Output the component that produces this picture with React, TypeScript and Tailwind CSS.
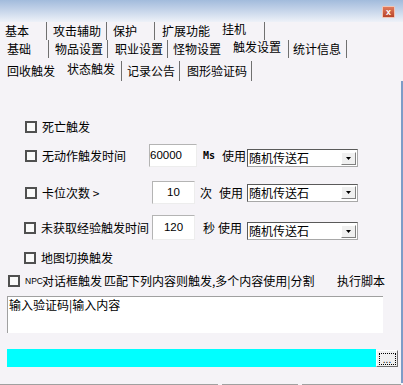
import React from 'react';

type Tab = { t: string; w: number; pl: number; sep: boolean; active?: boolean };

const ROW1: Tab[] = [
  { t: '基本', w: 47, pl: 5, sep: true },
  { t: '攻击辅助', w: 60, pl: 6, sep: true },
  { t: '保护', w: 48, pl: 6, sep: true },
  { t: '扩展功能', w: 62, pl: 7, sep: false },
  { t: '挂机', w: 48, pl: 5, sep: true, active: true },
];

const ROW2: Tab[] = [
  { t: '基础', w: 49, pl: 7, sep: true },
  { t: '物品设置', w: 59, pl: 6, sep: true },
  { t: '职业设置', w: 60, pl: 7, sep: true },
  { t: '怪物设置', w: 60, pl: 5, sep: false },
  { t: '触发设置', w: 61, pl: 5, sep: true, active: true },
  { t: '统计信息', w: 58, pl: 4, sep: true },
];

const ROW3: Tab[] = [
  { t: '回收触发', w: 62, pl: 7, sep: false },
  { t: '状态触发', w: 60, pl: 5, sep: true, active: true },
  { t: '记录公告', w: 58, pl: 5, sep: true },
  { t: '图形验证码', w: 72, pl: 7, sep: true },
];

function TabRow({ tabs, h }: { tabs: Tab[]; h: string }) {
  return (
    <div className={`flex ${h}`}>
      {tabs.map((tab) => (
        <div
          key={tab.t}
          className={`flex items-center shrink-0 h-full text-[12px] leading-none text-black ${tab.sep ? 'border-r border-[#707070]' : ''}`}
          style={{ width: tab.w, paddingLeft: tab.pl }}
        >
          <span className={tab.active ? '-translate-y-[2px]' : ''}>{tab.t}</span>
        </div>
      ))}
    </div>
  );
}

function Check() {
  return <div className="w-[12px] h-[12px] shrink-0 border-2 border-[#505050] bg-[#fafafa]" />;
}

function Dropdown() {
  return (
    <div className="flex items-center w-[111px] h-[18px] shrink-0 bg-white border border-t-[#5a5a5a] border-l-[#5a5a5a] border-r-[#a8a8a8] border-b-[#a8a8a8]">
      <span className="pl-[1px] text-[12px] leading-none grow">随机传送石</span>
      <div className="w-[15px] h-[13px] mr-[1px] flex items-center justify-center bg-[#f0f0f0] border border-t-white border-l-white border-r-[#808080] border-b-[#808080]">
        <svg width="5" height="3" viewBox="0 0 5 3">
          <path d="M0 0h5L2.5 3z" fill="#000" />
        </svg>
      </div>
    </div>
  );
}

function NumInput({ v, w, h, center }: { v: string; w: string; h: string; center?: boolean }) {
  return (
    <div
      className={`${w} ${h} shrink-0 flex items-center bg-white border border-t-[#b4b4b4] border-l-[#b4b4b4] border-r-[#ededed] border-b-[#ededed] text-[11.5px] leading-none font-['Liberation_Sans',sans-serif] ${center ? 'justify-center' : ''}`}
    >
      {v}
    </div>
  );
}

export default function App() {
  return (
    <div className="w-[403px] h-[385px] overflow-hidden bg-[#f5f3f7] text-black font-['Noto_Sans_CJK_SC','Noto_Sans',sans-serif]">
      {/* title bar */}
      <div className="h-[22px] flex justify-end items-start pt-[6px] pr-[8px] bg-gradient-to-b from-[#a2bbdc] to-[#eef1f8]">
        <div className="w-[13px] h-[12px] flex items-center justify-center rounded-[1px] bg-gradient-to-b from-[#e07a5c] to-[#b8442a] border border-[#f2c4b4] text-white text-[9px] font-bold leading-none font-['Liberation_Sans',sans-serif]">
          x
        </div>
      </div>

      <TabRow tabs={ROW1} h="h-[18px]" />
      <TabRow tabs={ROW2} h="h-[18px]" />
      <div className="mt-[3px]">
        <TabRow tabs={ROW3} h="h-[20px]" />
      </div>

      {/* content panel */}
      <div className="h-[302px] border-r-2 border-[#7d9cc7] flex flex-col">
        <div className="mt-[38px] h-[16px] flex items-center pl-[25px]">
          <Check />
          <span className="ml-[5px] text-[12px] leading-none">死亡触发</span>
        </div>

        <div className="mt-[9px] h-[23px] flex items-center pl-[25px]">
          <Check />
          <span className="ml-[5px] w-[107px] text-[12px] leading-none">无动作触发时间</span>
          <NumInput v="60000" w="w-[48px]" h="h-[23px]" />
          <span className="w-[25px] pl-[6px] text-[10px] font-bold leading-none font-['DejaVu_Sans_Mono',monospace]">Ms</span>
          <span className="w-[25px] text-[12px] leading-none">使用</span>
          <div className="self-end">
            <Dropdown />
          </div>
        </div>

        <div className="mt-[14px] h-[23px] flex items-center pl-[25px]">
          <Check />
          <span className="ml-[5px] w-[110px] text-[12px] leading-none">卡位次数 &gt;</span>
          <NumInput v="10" w="w-[43px]" h="h-[23px]" center />
          <span className="w-[24px] pl-[5px] text-[12px] leading-none">次</span>
          <span className="w-[28px] text-[12px] leading-none">使用</span>
          <Dropdown />
        </div>

        <div className="mt-[11px] h-[25px] flex items-center pl-[24px]">
          <Check />
          <span className="ml-[5px] w-[111px] text-[12px] leading-none">未获取经验触发时间</span>
          <NumInput v="120" w="w-[43px]" h="h-[25px]" center />
          <span className="w-[23px] pl-[8px] text-[12px] leading-none">秒</span>
          <span className="w-[29px] text-[12px] leading-none">使用</span>
          <div className="self-end">
            <Dropdown />
          </div>
        </div>

        <div className="mt-[10px] h-[16px] flex items-center pl-[24px]">
          <Check />
          <span className="ml-[5px] text-[12px] leading-none">地图切换触发</span>
        </div>

        <div className="mt-[7px] h-[16px] flex items-center pl-[8px]">
          <Check />
          <div className="ml-[5px] w-[79px] flex items-center shrink-0 whitespace-nowrap">
            <span className="w-[17px] shrink-0 text-[8.5px] leading-none font-['Liberation_Sans',sans-serif]">NPC</span>
            <span className="text-[12px] leading-none">对话框触发</span>
          </div>
          <span className="w-[233px] shrink-0 text-[12px] leading-none whitespace-nowrap">匹配下列内容则触发,多个内容使用|分割</span>
          <span className="text-[12px] leading-none whitespace-nowrap">执行脚本</span>
        </div>

        <div className="mt-[7px] ml-[7px] w-[376px] h-[37px] bg-white border-t border-l border-[#a0a0a0] pl-[1px] pt-[2px] text-[12px] leading-none">
          输入验证码|输入内容
        </div>

        <div className="mt-[16px] ml-[7px] flex items-start">
          <div className="w-[369px] h-[18px] bg-[#00ffff]" />
          <div className="w-[22px] h-[17px] mt-[1px] flex items-center justify-center bg-[#f0f0f0] border border-t-white border-l-white border-r-[#707070] border-b-[#707070]">
            <div className="w-[17px] h-[12px] border border-dotted border-black flex items-end justify-center text-[10px] leading-[9px] font-['Liberation_Sans',sans-serif]">
              ...
            </div>
          </div>
        </div>
      </div>

      {/* bottom edge */}
      <div className="mt-[1px] flex h-[2px]">
        <div className="w-[218px] border-t border-[#a0a0a0]" />
        <div className="w-[4px]" />
        <div className="w-[76px] border-t border-[#a0a0a0]" />
        <div className="w-[4px]" />
        <div className="w-[99px] border-t border-[#a0a0a0]" />
      </div>
    </div>
  );
}
